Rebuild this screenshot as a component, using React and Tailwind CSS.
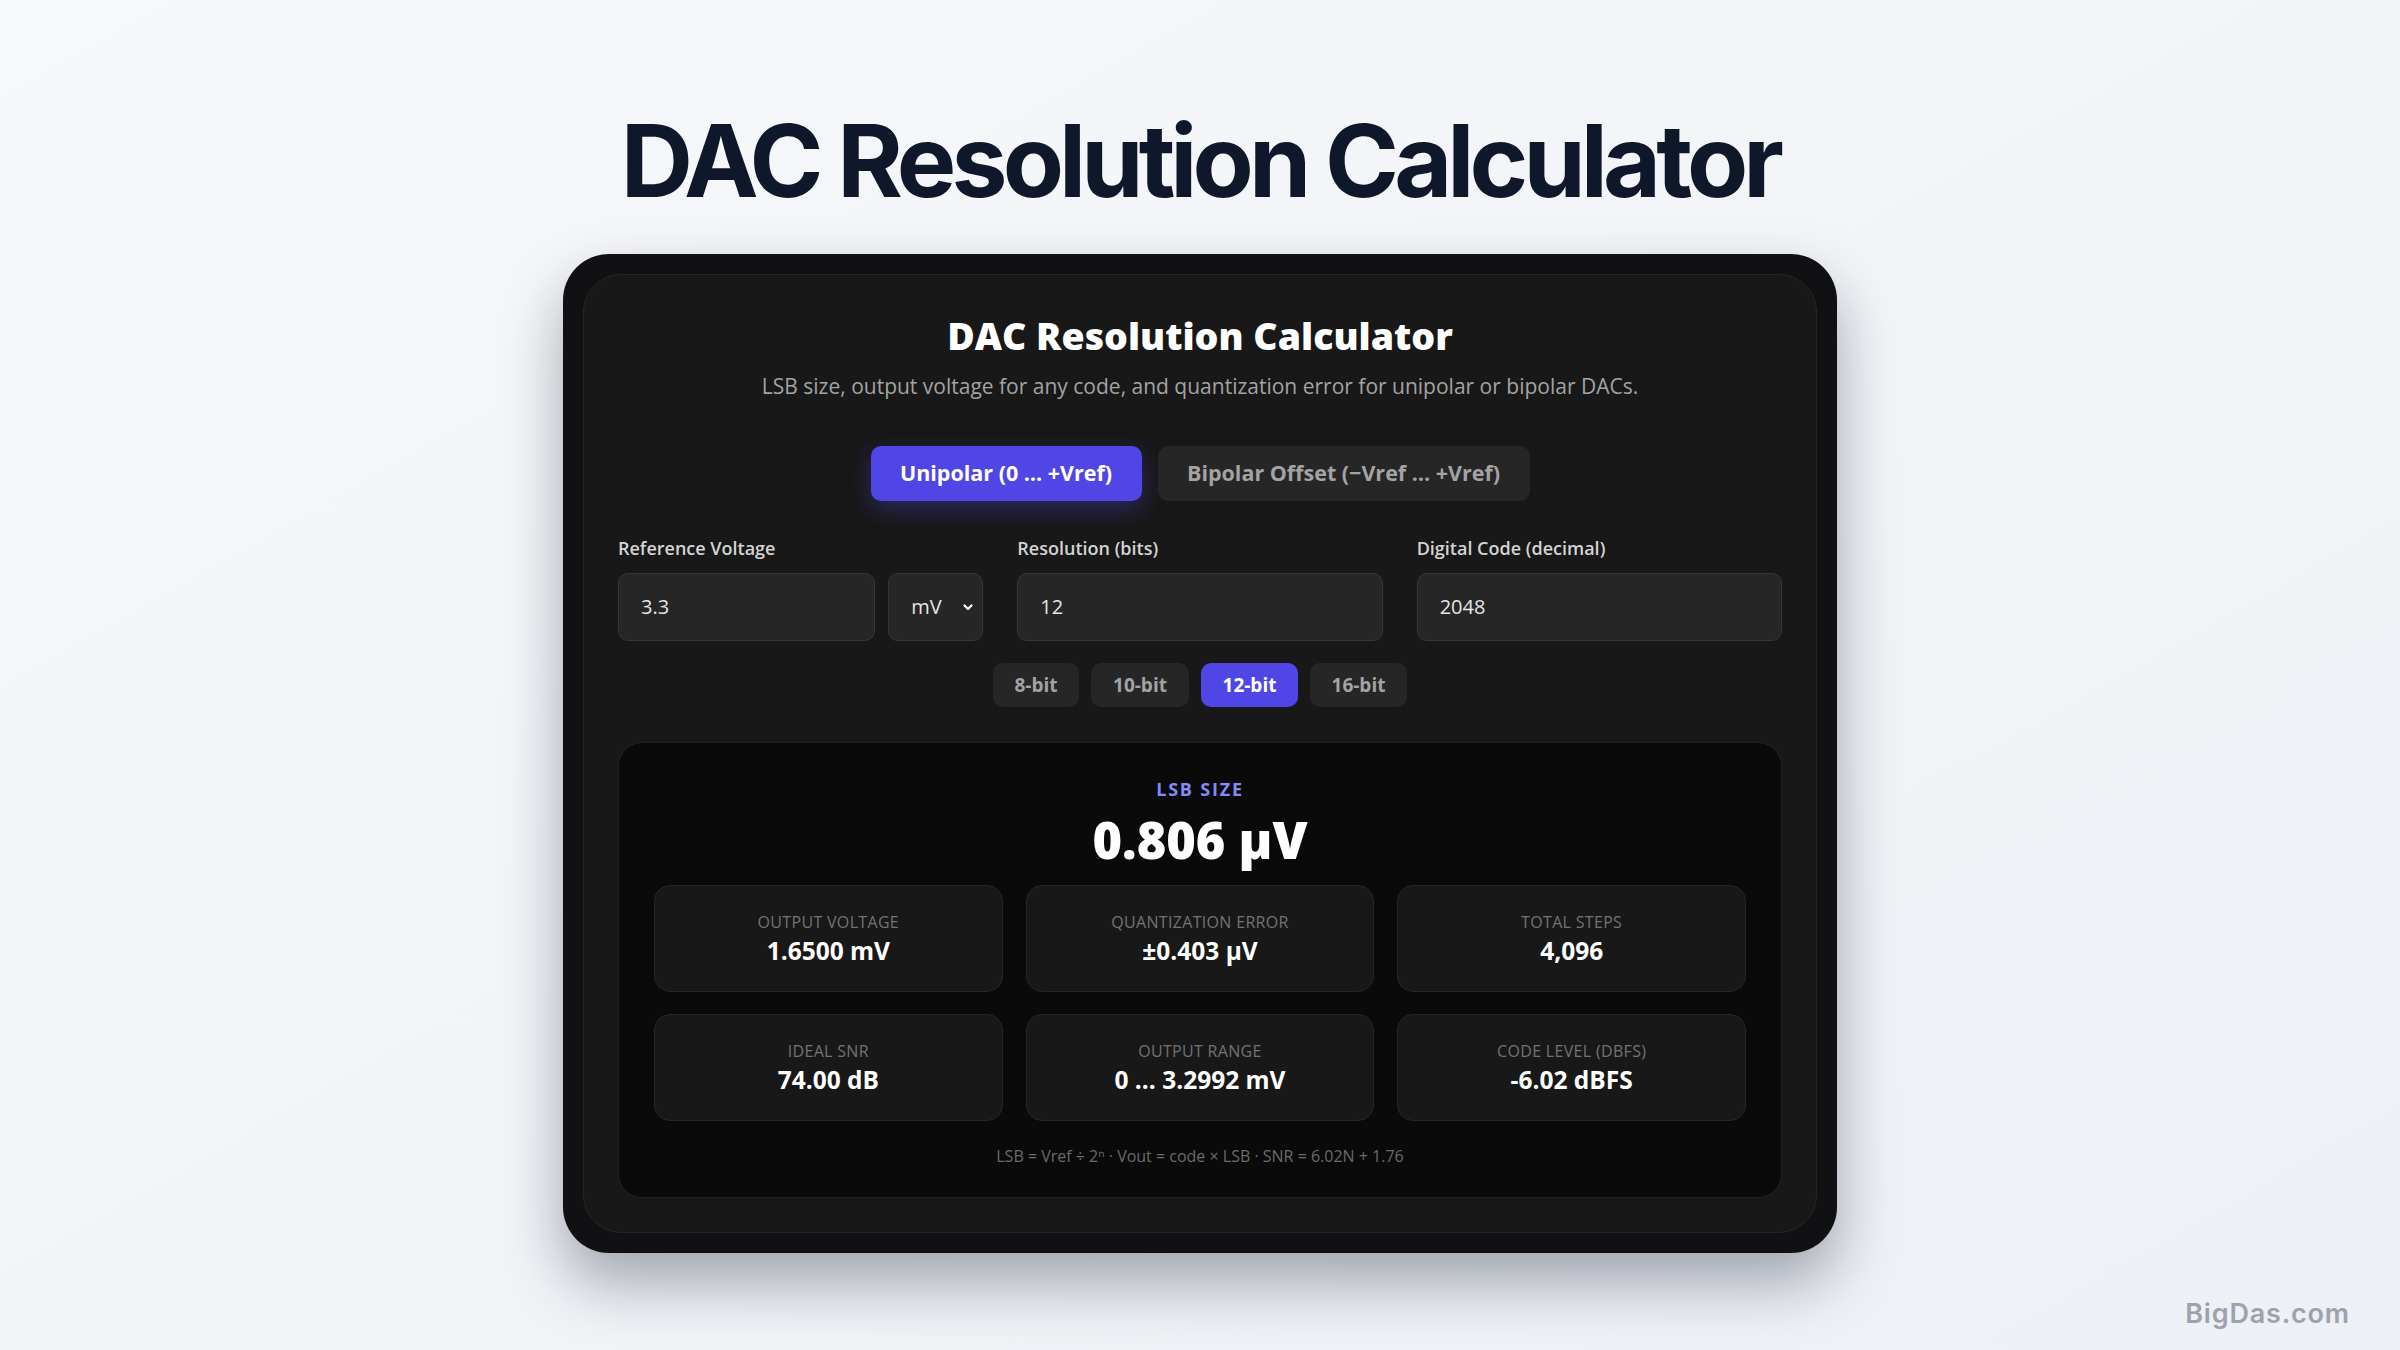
import React from "react";

const STATS = [
  { label: "Output Voltage", value: "1.6500 mV" },
  { label: "Quantization Error", value: "±0.403 µV" },
  { label: "Total Steps", value: "4,096" },
  { label: "Ideal SNR", value: "74.00 dB" },
  { label: "Output Range", value: "0 … 3.2992 mV" },
  { label: "Code Level (dBFS)", value: "-6.02 dBFS" },
];

const BITS = [
  { label: "8-bit", w: "w-[86px]" },
  { label: "10-bit", w: "w-[98px]" },
  { label: "12-bit", w: "w-[97px]", active: true },
  { label: "16-bit", w: "w-[97px]" },
];

function Field({ label, children }) {
  return (
    <div className="flex flex-col">
      <label className="text-[18px] leading-[24px] font-semibold text-[#d4d4d4]">{label}</label>
      <div className="mt-[13px] flex gap-[13px]">{children}</div>
    </div>
  );
}

function Box({ value, className = "" }) {
  return (
    <div
      className={`h-[68px] flex items-center pl-[22px] rounded-[10px] bg-[#262626] border border-[#363636] text-[20px] text-[#e5e5e5] ${className}`}
    >
      {value}
    </div>
  );
}

export default function App() {
  return (
    <div
      className="relative min-h-screen bg-gradient-to-br from-[#f7f8fa] to-[#edf0f5] flex flex-col items-center"
      style={{ fontFamily: '"Open Sans", "Noto Sans", sans-serif' }}
    >
      <h1
        className="pt-[111px] text-[100px] leading-none font-bold tracking-[-0.049em] text-[#0f172a]"
        style={{ fontFamily: 'Inter, "Liberation Sans", sans-serif' }}
      >
        DAC Resolution Calculator
      </h1>

      {/* device frame */}
      <div className="mt-[43px] w-[1274px] p-[20px] rounded-[46px] bg-[#111113] shadow-[0_30px_60px_rgba(15,23,42,0.35)]">
        <div className="rounded-[38px] bg-[#181818] border border-[#262626] pt-[40px] px-[34px] pb-[34px]">
          <h2 className="text-center text-[37.5px] leading-[42px] font-extrabold text-white">
            DAC Resolution Calculator
          </h2>
          <p className="mt-[15px] text-center text-[21px] leading-[28px] text-[#a3a3a3]">
            LSB size, output voltage for any code, and quantization error for unipolar or bipolar DACs.
          </p>

          {/* mode toggle */}
          <div className="mt-[46px] flex justify-center gap-[16px]">
            <button className="w-[271px] h-[55px] rounded-[10px] bg-[#4f46e5] text-white text-[21.5px] font-bold shadow-[0_8px_22px_rgba(79,70,229,0.35)]">
              Unipolar (0 … +Vref)
            </button>
            <button className="w-[372px] h-[55px] rounded-[10px] bg-[#262626] text-[#a3a3a3] text-[21.5px] font-bold">
              Bipolar Offset (−Vref … +Vref)
            </button>
          </div>

          {/* inputs */}
          <div className="mt-[35px] grid grid-cols-3 gap-[34px]">
            <Field label="Reference Voltage">
              <Box value="3.3" className="flex-1" />
              <div className="w-[95px] h-[68px] flex items-center justify-between pl-[22px] pr-[8px] rounded-[10px] bg-[#262626] border border-[#363636] text-[20px] text-[#e5e5e5]">
                mV
                <svg width="12" height="12" viewBox="0 0 24 24" fill="none" stroke="#ffffff" strokeWidth="4.5" strokeLinecap="round" strokeLinejoin="round">
                  <path d="M5 9l7 7 7-7" />
                </svg>
              </div>
            </Field>
            <Field label="Resolution (bits)">
              <Box value="12" className="flex-1" />
            </Field>
            <Field label="Digital Code (decimal)">
              <Box value="2048" className="flex-1" />
            </Field>
          </div>

          {/* bit presets */}
          <div className="mt-[22px] flex justify-center gap-[12px]">
            {BITS.map((b) => (
              <button
                key={b.label}
                className={`${b.w} h-[44px] rounded-[10px] text-[19px] font-bold ${
                  b.active ? "bg-[#4f46e5] text-white" : "bg-[#262626] text-[#a3a3a3]"
                }`}
              >
                {b.label}
              </button>
            ))}
          </div>

          {/* results */}
          <div className="mt-[35px] rounded-[24px] bg-[#0a0a0a] border border-[#222222] pt-[34px] px-[35px] pb-[31px]">
            <div className="text-center text-[18px] leading-[24px] font-bold tracking-[0.1em] text-[#818cf8]">
              LSB SIZE
            </div>
            <div className="mt-[11px] text-center text-[50.5px] leading-[56px] font-extrabold text-white">
              0.806 µV
            </div>
            <div className="mt-[17px] grid grid-cols-3 gap-x-[23px] gap-y-[22px]">
              {STATS.map((s) => (
                <div
                  key={s.label}
                  className="h-[107px] flex flex-col items-center justify-center rounded-[16px] bg-[#181818] border border-[#262626]"
                >
                  <div className="text-[16px] leading-[22px] uppercase tracking-[0.02em] text-[#737373]">
                    {s.label}
                  </div>
                  <div className="mt-[2px] text-[24.5px] leading-[32px] font-bold text-white">{s.value}</div>
                </div>
              ))}
            </div>
            <div className="mt-[25px] text-center text-[16px] leading-[20px] text-[#6b6b6b]">
              LSB = Vref ÷ 2ⁿ · Vout = code × LSB · SNR = 6.02N + 1.76
            </div>
          </div>
        </div>
      </div>

      <div
        className="absolute right-[50px] bottom-[16px] text-[27px] font-semibold tracking-[0.03em] text-[#9ca3af]"
        style={{ fontFamily: 'Inter, "Liberation Sans", sans-serif' }}
      >
        BigDas.com
      </div>
    </div>
  );
}
